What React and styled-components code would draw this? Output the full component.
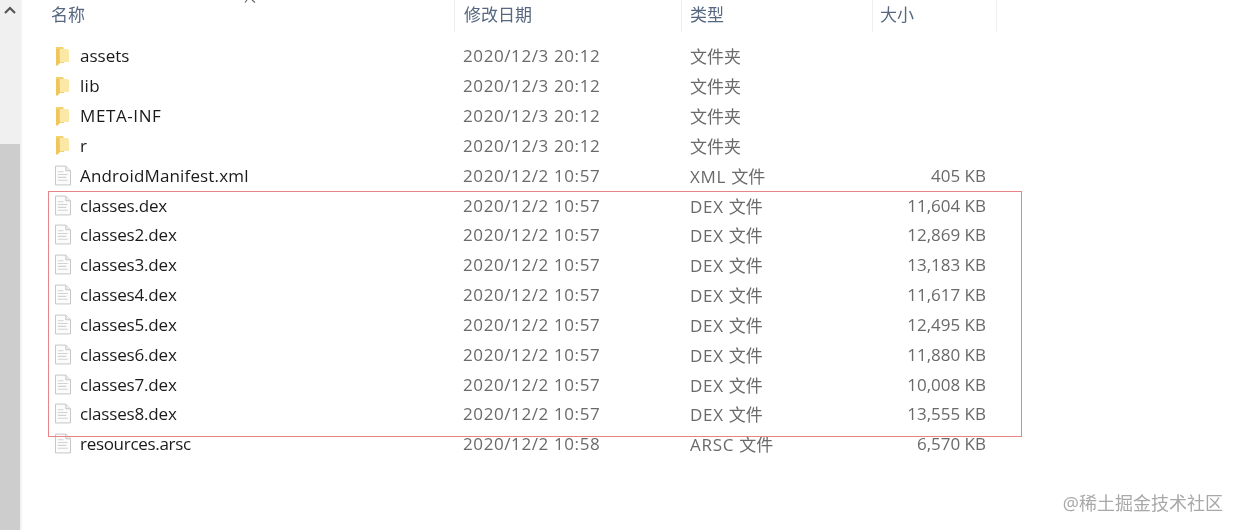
import React from 'react';
import styled, { createGlobalStyle } from 'styled-components';

const GlobalStyle = createGlobalStyle`
    html, body {
        margin: 0;
        padding: 0;
        background: #fff;
    }
    body {
        width: 1240px;
        height: 530px;
        overflow: hidden;
        font-family: 'Open Sans', 'Noto Sans CJK SC', sans-serif;
    }
`;

const Page = styled.div`
    position: relative;
    display: flex;
    width: 1240px;
    height: 530px;
    overflow: hidden;
    filter: blur(0.35px);
`;

const Scrollbar = styled.div`
    display: flex;
    flex-direction: column;
    width: 20px;
    flex-shrink: 0;
    border-right: 2px solid #f3f3f3;
    background: #f0f0f0;
`;

const ScrollArrow = styled.div`
    display: flex;
    justify-content: center;
    padding-top: 6px;
    height: 138px;
`;

const ScrollThumb = styled.div`
    flex: 1;
    background: #cdcdcd;
`;

const Explorer = styled.div`
    flex: 1;
    display: flex;
    flex-direction: column;
`;

const columns = '433px 227px 191px 124px';

const HeaderRow = styled.div`
    display: grid;
    grid-template-columns: ${columns};
    height: 32px;
    margin-bottom: 9px;
`;

const HeaderCell = styled.div`
    box-sizing: border-box;
    height: 32px;
    padding-left: ${(p) => p.$indent}px;
    border-right: 1px solid #eceef1;
    font-size: 17px;
    line-height: 30px;
    color: #56677f;
`;

const Row = styled.div`
    display: grid;
    grid-template-columns: ${columns};
    height: 29.83px;
    align-items: center;
    font-size: 17px;
    color: #6a6a6a;
`;

const NameCell = styled.div`
    display: flex;
    align-items: center;
    gap: 9px;
    padding-left: 33px;
    color: #1a1a1a;
    letter-spacing: ${(p) => p.$track || 0}px;
`;

const IconSlot = styled.div`
    display: flex;
    justify-content: center;
    width: 16px;
`;

const DateCell = styled.div`
    padding-left: 8px;
    letter-spacing: 0.6px;
`;

const TypeCell = styled.div`
    padding-left: 8px;
`;

const TypeExt = styled.span`
    letter-spacing: 0.7px;
`;

const SizeCell = styled.div`
    padding-right: 11px;
    text-align: right;
`;

const Highlight = styled.div`
    position: absolute;
    box-sizing: border-box;
    left: 48px;
    top: 191px;
    width: 974px;
    height: 246px;
    border: 1.5px solid #e98484;
`;

const Watermark = styled.div`
    position: absolute;
    right: 17px;
    top: 491px;
    font-size: 18px;
    line-height: 24px;
    color: #a8a8a8;
`;

const CutOffMark = styled.svg`
    position: absolute;
    left: 244px;
    top: 0;
`;

const ChevronUp = () => (
    <svg width="12" height="8" viewBox="0 0 12 8">
        <path d="M1 7 L6 2 L11 7" fill="none" stroke="#555" strokeWidth="2.2" />
    </svg>
);

const FolderIcon = () => (
    <svg width="14" height="20" viewBox="0 0 14 20">
        <path d="M0 1 L7 1 L8 3 L8 17 L0 17 Z" fill="#f3d36f" />
        <path d="M4 3 L12 3 L13 5 L13 16 L4 16 Z" fill="#fbe7a6" />
        <path d="M0 3 L3 3 L4 17 L1 20 L0 19 Z" fill="#efc65c" />
    </svg>
);

const FileIcon = () => (
    <svg width="17" height="21" viewBox="0 0 17 21">
        <path d="M0.5 0.5 H11.5 L16.5 5.5 V20.5 H0.5 Z" fill="#fcfcfc" stroke="#c2c2c2" />
        <path d="M11.5 0.5 V5.5 H16.5" fill="#efefef" stroke="#c2c2c2" />
        <path d="M3 6.5 H9 M3 9.5 H13.5 M3 12.5 H12 M3 15.5 H13.5" stroke="#d2d2d2" strokeWidth="1.2" />
    </svg>
);

const dexDate = '2020/12/2 10:57';
const dirDate = '2020/12/3 20:12';

const files = [
    { name: 'assets', date: dirDate, type: '文件夹', folder: true },
    { name: 'lib', date: dirDate, type: '文件夹', folder: true, track: 0.3 },
    { name: 'META-INF', date: dirDate, type: '文件夹', folder: true, track: 0.6 },
    { name: 'r', date: dirDate, type: '文件夹', folder: true },
    { name: 'AndroidManifest.xml', date: dexDate, ext: 'XML', type: '文件', size: '405 KB', track: 0.15 },
    { name: 'classes.dex', date: dexDate, ext: 'DEX', type: '文件', size: '11,604 KB', track: -0.18 },
    { name: 'classes2.dex', date: dexDate, ext: 'DEX', type: '文件', size: '12,869 KB', track: -0.18 },
    { name: 'classes3.dex', date: dexDate, ext: 'DEX', type: '文件', size: '13,183 KB', track: -0.18 },
    { name: 'classes4.dex', date: dexDate, ext: 'DEX', type: '文件', size: '11,617 KB', track: -0.18 },
    { name: 'classes5.dex', date: dexDate, ext: 'DEX', type: '文件', size: '12,495 KB', track: -0.18 },
    { name: 'classes6.dex', date: dexDate, ext: 'DEX', type: '文件', size: '11,880 KB', track: -0.18 },
    { name: 'classes7.dex', date: dexDate, ext: 'DEX', type: '文件', size: '10,008 KB', track: -0.18 },
    { name: 'classes8.dex', date: dexDate, ext: 'DEX', type: '文件', size: '13,555 KB', track: -0.18 },
    { name: 'resources.arsc', date: '2020/12/2 10:58', ext: 'ARSC', type: '文件', size: '6,570 KB', track: -0.3 },
];

const App = () => (
    <Page>
        <GlobalStyle />
        <Scrollbar>
            <ScrollArrow>
                <ChevronUp />
            </ScrollArrow>
            <ScrollThumb />
        </Scrollbar>
        <Explorer>
            <HeaderRow>
                <HeaderCell $indent={29}>名称</HeaderCell>
                <HeaderCell $indent={9}>修改日期</HeaderCell>
                <HeaderCell $indent={8}>类型</HeaderCell>
                <HeaderCell $indent={7}>大小</HeaderCell>
            </HeaderRow>
            {files.map((file) => (
                <Row key={file.name}>
                    <NameCell $track={file.track}>
                        <IconSlot>{file.folder ? <FolderIcon /> : <FileIcon />}</IconSlot>
                        {file.name}
                    </NameCell>
                    <DateCell>{file.date}</DateCell>
                    <TypeCell>
                        {file.ext && <TypeExt>{file.ext} </TypeExt>}
                        {file.type}
                    </TypeCell>
                    <SizeCell>{file.size}</SizeCell>
                </Row>
            ))}
        </Explorer>
        <CutOffMark width="12" height="3" viewBox="0 0 12 3">
            <path d="M3 0 L1 2.5 M8 0 L11 2.5" stroke="#666" strokeWidth="1.2" />
        </CutOffMark>
        <Highlight />
        <Watermark>@稀土掘金技术社区</Watermark>
    </Page>
);

export default App;
